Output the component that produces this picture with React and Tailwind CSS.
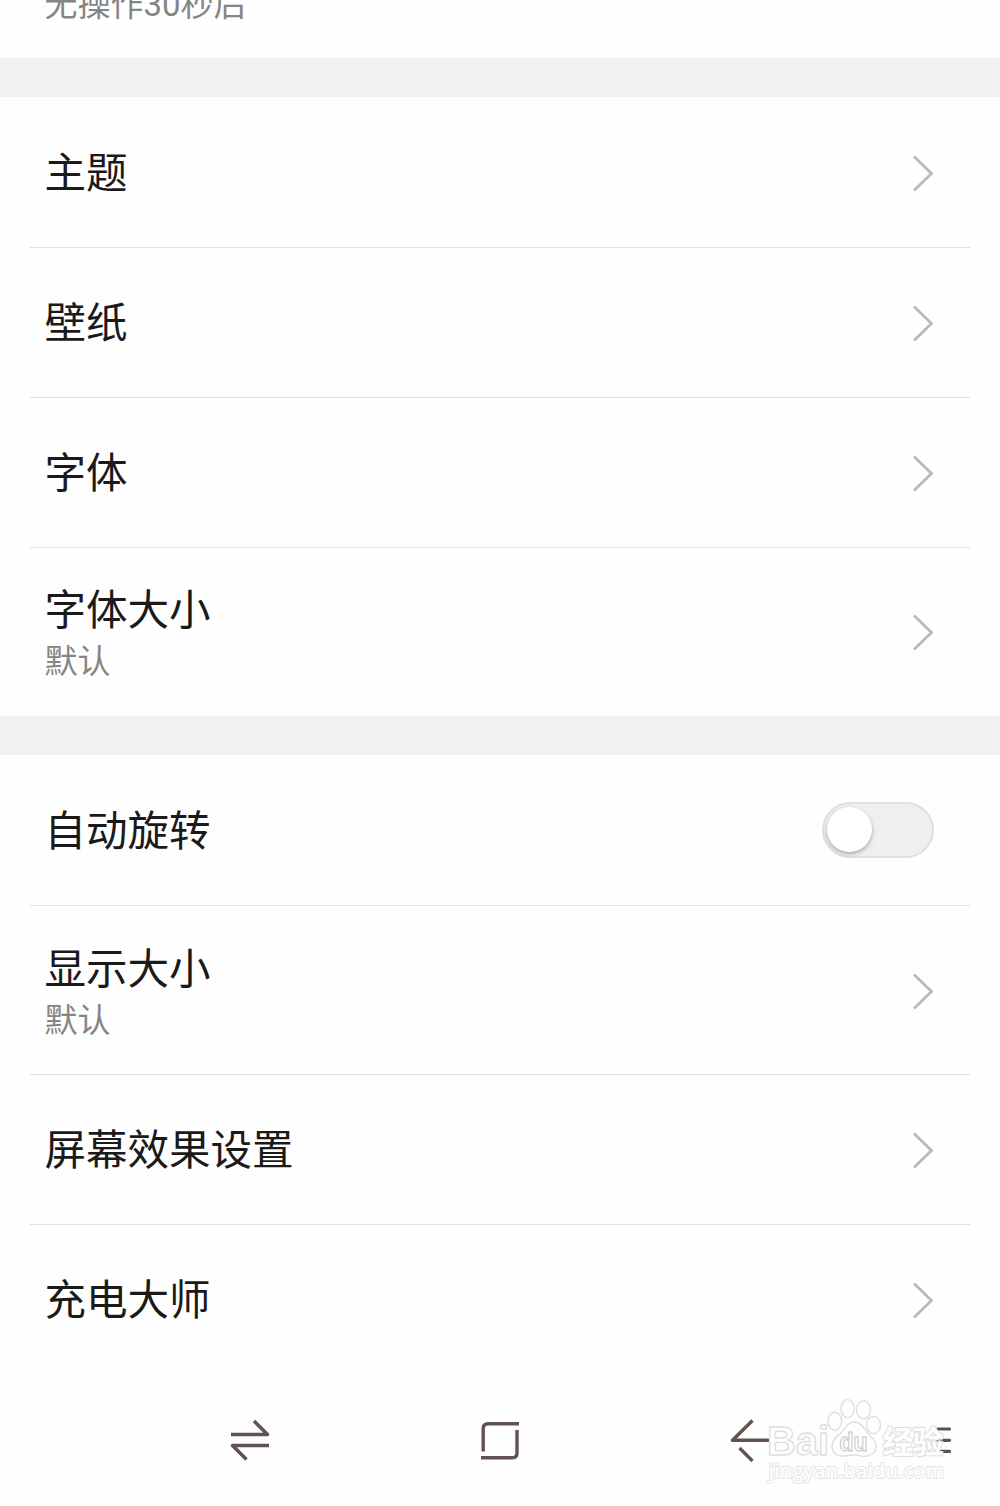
import React, { useState } from 'react';

const displayItems = [
  { title: '主题' },
  { title: '壁纸' },
  { title: '字体' },
  { title: '字体大小', summary: '默认' },
];

const screenItems = [
  { title: '自动旋转', toggle: true },
  { title: '显示大小', summary: '默认' },
  { title: '屏幕效果设置' },
  { title: '充电大师' },
];

const Chevron = () => (
  <svg width="22" height="38" viewBox="0 0 22 38" fill="none" className="mt-px shrink-0">
    <path d="M2 2.4L19.5 19.4L2 36.4" stroke="#b9b9b9" strokeWidth="2.8" />
  </svg>
);

const Toggle = () => {
  const [on, setOn] = useState(false);

  return (
    <button
      type="button"
      role="switch"
      aria-checked={on}
      onClick={() => setOn(!on)}
      className={`mb-0.5 flex h-14 w-28 items-center rounded-full border-2 border-[#e0e0e0] bg-[#efefef] px-[3px] ${on ? 'justify-end' : ''}`}
    >
      <span className="size-[45px] rounded-full bg-white shadow-[0_2px_4px_rgba(0,0,0,0.3)]" />
    </button>
  );
};

const Row = ({ item, last }) => (
  <div
    className={`mx-[30px] flex items-center justify-between border-b pr-9 pl-[14.5px] ${
      item.summary ? (last ? 'h-[168px]' : 'h-[169px]') : 'h-[150px]'
    } ${last ? 'border-transparent' : 'border-[#dfdfdf]'}`}
  >
    <div className={`flex flex-col ${item.summary ? 'pt-[11px]' : 'pt-[3px]'}`}>
      <span className="text-[41.5px] leading-[50px] text-[#1a1a1a]">{item.title}</span>
      {item.summary && (
        <span className="text-[33px] leading-[52px] text-[#858585]">{item.summary}</span>
      )}
    </div>
    {item.toggle ? <Toggle /> : <Chevron />}
  </div>
);

const Section = ({ items }) => (
  <section className="pt-px">
    {items.map((item, i) => (
      <Row key={item.title} item={item} last={i === items.length - 1} />
    ))}
  </section>
);

const NavBar = () => (
  <nav className="flex h-[130px] items-center pl-[230px]">
    <svg width="40" height="44" viewBox="0 0 40 44" fill="none" stroke="#625350" strokeWidth="3.6">
      <path d="M1 16.5H37.5L24 3" strokeLinejoin="round" />
      <path d="M39 27.5H2.5L16.5 41.5" strokeLinejoin="round" />
    </svg>
    <svg width="40" height="44" viewBox="0 0 40 44" fill="none" stroke="#625350" strokeWidth="3.4" className="ml-[210px]">
      <path d="M3.2 33.5V10.5Q3.2 5.7 8 5.7H39" />
      <path d="M37 12V35Q37 39.8 32.2 39.8H1" />
    </svg>
    <svg width="40" height="44" viewBox="0 0 40 44" fill="none" stroke="#625350" strokeWidth="3.4" className="ml-[210px]">
      <path d="M22.5 2.5L2.5 22.3H39" strokeLinejoin="round" />
      <path d="M9.5 30L22.5 43" />
    </svg>
    <svg width="20" height="44" viewBox="0 0 20 44" fill="none" stroke="#555" strokeWidth="3.2" strokeLinecap="round" className="ml-[162px]">
      <path d="M6 11H17.5M6 22.3H17.5M6 33.4H17.5" />
    </svg>
  </nav>
);

const Watermark = () => (
  <svg
    width="194"
    height="96"
    viewBox="0 0 194 96"
    className="pointer-events-none absolute top-[1394px] left-[762px]"
    fill="#fefefe"
    stroke="#dedede"
    strokeWidth="1.4"
    strokeLinejoin="round"
  >
    <text x="5" y="60.5" fontSize="41" textLength="62" lengthAdjust="spacingAndGlyphs" className="font-['Liberation_Sans'] font-bold">Bai</text>
    <ellipse cx="72.8" cy="27.3" rx="6.8" ry="9" />
    <ellipse cx="85.6" cy="14.6" rx="6.6" ry="9" />
    <ellipse cx="101.5" cy="15.8" rx="7" ry="8.8" />
    <ellipse cx="111.5" cy="31" rx="7" ry="8.6" />
    <path d="M92 28C86 28 84 33 80 38C76 42 70 45 70 52C70 58 74 62 80 62C85 62 88 61 92 61C97 61 100 63 105 62C111 61 115 57 114 51C113 44 107 42 104 37C101 32 98 28 92 28Z" />
    <text x="77.5" y="57" fontSize="25" textLength="28" lengthAdjust="spacingAndGlyphs" stroke="#d2d2d2" className="font-['Liberation_Sans'] font-bold">du</text>
    <text x="120.5" y="58.5" fontSize="31" textLength="61" strokeWidth="2.2" paintOrder="stroke" className="font-['Noto_Sans_CJK_SC'] font-bold">经验</text>
    <text x="6.5" y="84" fontSize="20.5" textLength="176" lengthAdjust="spacingAndGlyphs" stroke="#e4e4e4" strokeWidth="1.8" paintOrder="stroke" className="font-['Open_Sans'] font-semibold">jingyan.baidu.com</text>
  </svg>
);

const App = () => {
  return (
    <div className="relative h-[1506px] w-[1000px] overflow-hidden bg-[#fefefe] font-[Roboto,'Noto_Sans_CJK_SC',sans-serif]">
      <div className="flex h-[58px] items-end pb-[27px] pl-[44.5px]">
        <span className="text-[33px] leading-[52px] text-[#858585]">无操作30秒后</span>
      </div>
      <div className="h-[39px] bg-[#f1f1f1]" />
      <Section items={displayItems} />
      <div className="h-[39px] bg-[#f1f1f1]" />
      <Section items={screenItems} />
      <NavBar />
      <Watermark />
    </div>
  );
};

export default App;
